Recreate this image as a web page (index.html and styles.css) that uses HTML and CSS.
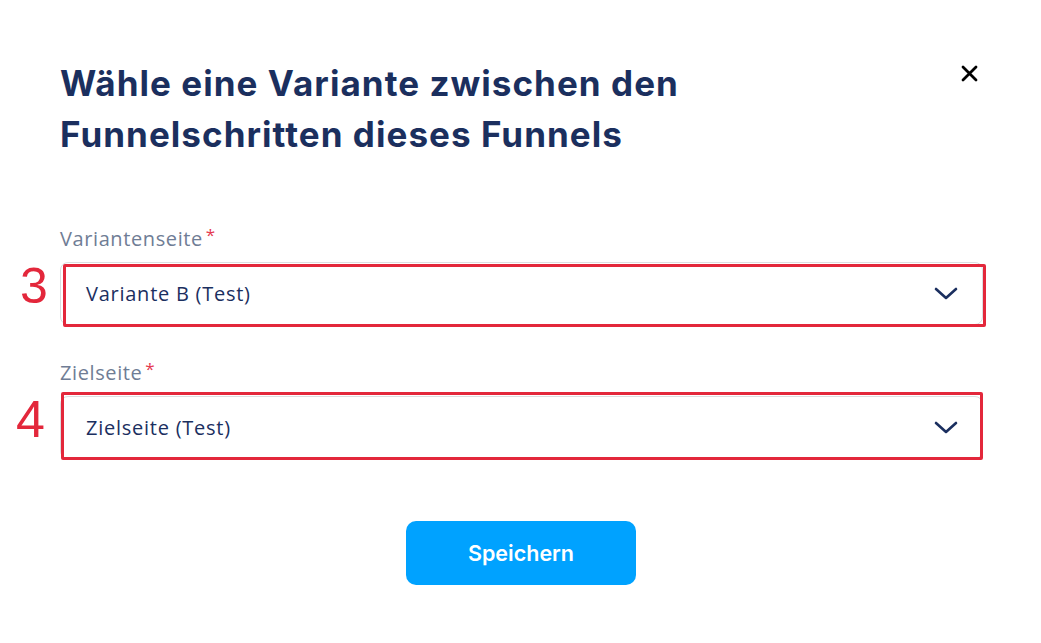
FILE: index.html
```html
<!DOCTYPE html>
<html lang="de">
<head>
<meta charset="utf-8">
<title>Variante wählen</title>
<link rel="stylesheet" href="styles.css">
</head>
<body>
<div class="modal">
  <div class="header">
    <h1 class="title">Wähle eine Variante zwischen den Funnelschritten dieses Funnels</h1>
    <button class="close" aria-label="Schließen">
      <svg width="17" height="17" viewBox="0 0 17 17"><path d="M2 2 L15 15 M15 2 L2 15" stroke="#000" stroke-width="2.8" stroke-linecap="round"/></svg>
    </button>
  </div>

  <div class="field field-1">
    <label class="label">Variantenseite<span class="req">*</span></label>
    <div class="control">
      <div class="select">
        <span class="value">Variante B (Test)</span>
        <svg class="chev" width="24" height="14" viewBox="0 0 24 14"><path d="M2 2 L12 11 L22 2" fill="none" stroke="#1b2f5f" stroke-width="2.6" stroke-linecap="round" stroke-linejoin="round"/></svg>
      </div>
      <span class="mark mark-1">3</span>
      <span class="hl hl-1"></span>
    </div>
  </div>

  <div class="field field-2">
    <label class="label">Zielseite<span class="req">*</span></label>
    <div class="control">
      <div class="select">
        <span class="value">Zielseite (Test)</span>
        <svg class="chev" width="24" height="14" viewBox="0 0 24 14"><path d="M2 2 L12 11 L22 2" fill="none" stroke="#1b2f5f" stroke-width="2.6" stroke-linecap="round" stroke-linejoin="round"/></svg>
      </div>
      <span class="mark mark-2">4</span>
      <span class="hl hl-2"></span>
    </div>
  </div>

  <div class="actions">
    <button class="save">Speichern</button>
  </div>
</div>
</body>
</html>
```
FILE: styles.css
```css
html, body {
  margin: 0;
  padding: 0;
  background: #ffffff;
}

.modal {
  width: 1041px;
  height: 643px;
  box-sizing: border-box;
  padding: 58px 58px 0 60px;
  font-family: "Open Sans", Lato, sans-serif;
}

.header {
  display: flex;
  justify-content: space-between;
  align-items: flex-start;
}

.title {
  margin: 0;
  width: 700px;
  font-family: Inter, "Liberation Sans", sans-serif;
  font-weight: 700;
  font-size: 35px;
  line-height: 51px;
  color: #1b2f5e;
  letter-spacing: 1.05px;
}

.close {
  margin: 7px 5px 0 0;
  padding: 0;
  border: 0;
  background: none;
  width: 17px;
  height: 17px;
  display: block;
}
.close svg { display: block; }

.field-1 { margin-top: 66px; }
.field-2 { margin-top: 35px; }

.label {
  display: block;
  font-size: 20px;
  line-height: 26px;
  color: #6f7d95;
  letter-spacing: 0.6px;
  margin-bottom: 10px;
}
.req {
  color: #e5394f;
  font-size: 17px;
  line-height: 0;
  vertical-align: 5px;
  margin-left: 3px;
}

.control {
  position: relative;
}

.select {
  height: 63px;
  box-sizing: border-box;
  border: 1px solid #dcdde0;
  border-radius: 8px;
  display: flex;
  align-items: center;
  justify-content: space-between;
  padding: 0 24px 0 25px;
  background: #fff;
}
.value {
  font-size: 20px;
  letter-spacing: 0.75px;
  color: #1b2f5f;
}
.chev { display: block; }

.mark {
  position: absolute;
  font-family: "Liberation Sans", Arial, sans-serif;
  line-height: 1;
  color: #e3273b;
}
.mark-1 { left: -40px; top: -1px; font-size: 50px; }
.mark-2 { left: -44px; top: -3px; font-size: 52px; }

.hl {
  position: absolute;
  border: 3px solid #e3273b;
  box-sizing: border-box;
  border-radius: 2px;
  pointer-events: none;
}
.hl-1 { left: 3px; top: 2px; width: 923px; height: 63px; }
.hl-2 { left: 1px; top: -4px; width: 922px; height: 68px; }

.actions {
  display: flex;
  justify-content: center;
  margin-top: 62px;
}
.save {
  width: 230px;
  height: 64px;
  border: 0;
  border-radius: 10px;
  background: #00a2ff;
  color: #ffffff;
  font-family: Inter, "Liberation Sans", sans-serif;
  font-weight: 600;
  font-size: 21.5px;
  margin-left: -1px;
}
```
